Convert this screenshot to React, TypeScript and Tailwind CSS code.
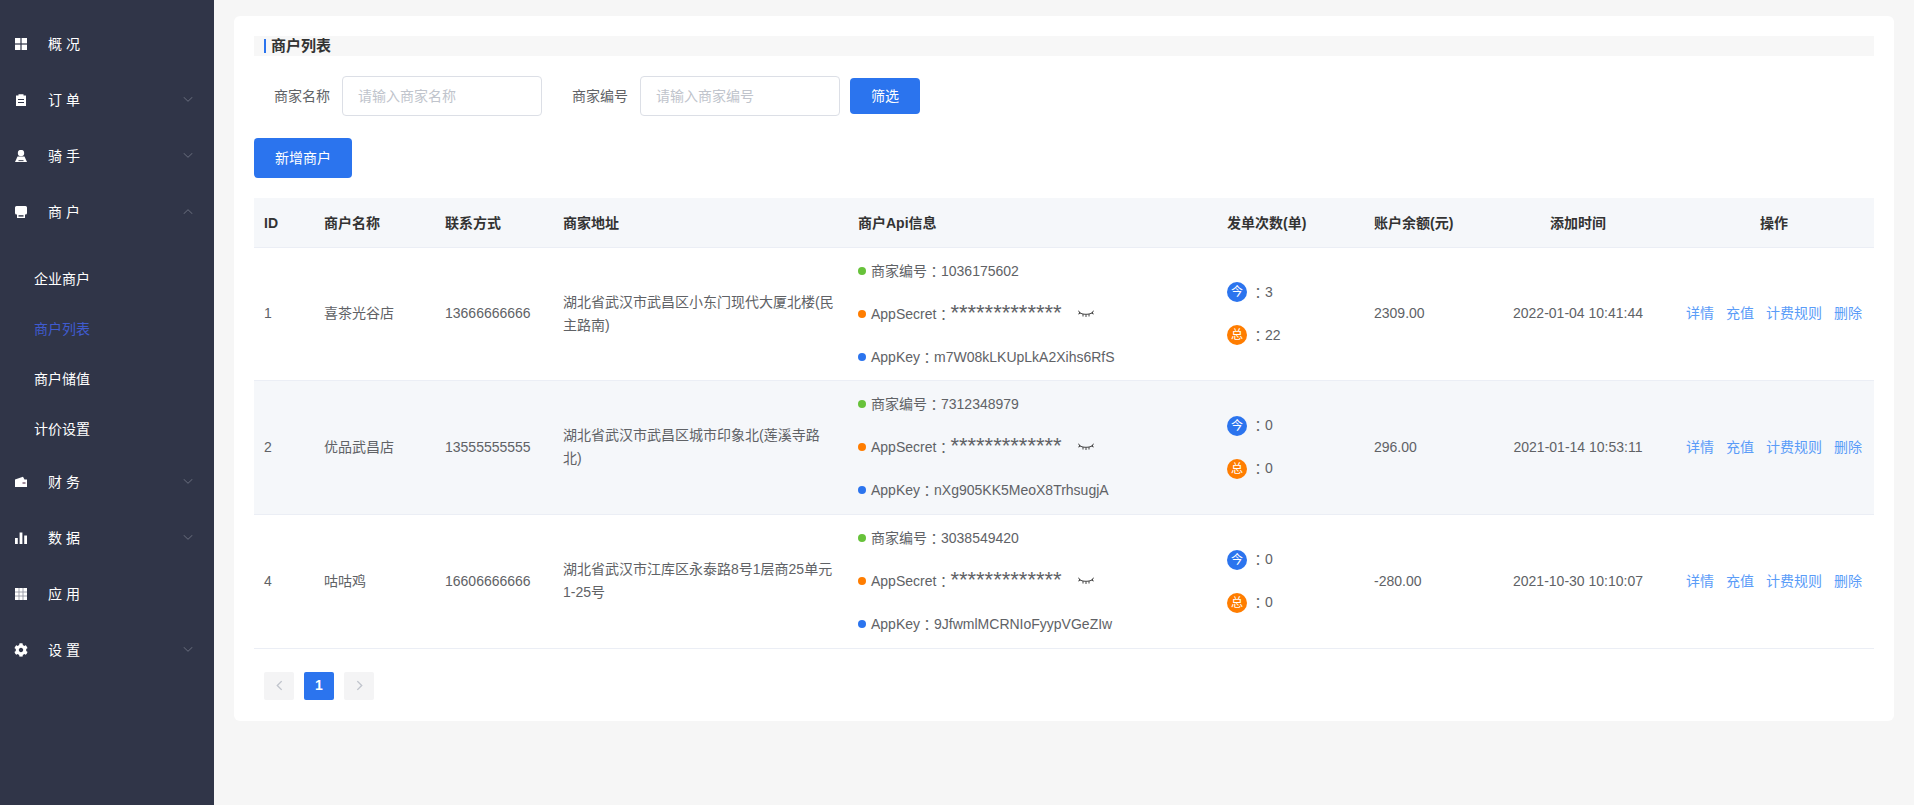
import React from "react";
import { FaCog } from "react-icons/fa";

const F = { fontFamily: '"Liberation Sans","Noto Sans CJK SC",sans-serif' };

const Ic = ({ children }: { children: React.ReactNode }) => (
  <svg viewBox="0 0 12 12" className="w-[12px] h-[12px] shrink-0" fill="#fff">{children}</svg>
);

const icons: Record<string, React.ReactNode> = {
  grid: <Ic><rect x="0" y="0" width="5.4" height="5.4" /><rect x="6.6" y="0" width="5.4" height="5.4" /><rect x="0" y="6.6" width="5.4" height="5.4" /><rect x="6.6" y="6.6" width="5.4" height="5.4" /></Ic>,
  order: <Ic><path d="M1 1.5h2.5V.3h5v1.2H11V12H1z" /><rect x="3" y="5" width="6" height="1" fill="#303548" /><rect x="3" y="8" width="6" height="1" fill="#303548" /></Ic>,
  user: <Ic><circle cx="6" cy="3" r="3.2" /><path d="M2.5 6.5h7L12 12H0z" /><rect x="3.5" y="10.2" width="5" height="0.9" fill="#303548" /></Ic>,
  shop: <Ic><path d="M1.5 0h9A1.5 1.5 0 0 1 12 1.5V7a1.5 1.5 0 0 1-1.5 1.5h-9A1.5 1.5 0 0 1 0 7V1.5A1.5 1.5 0 0 1 1.5 0z" /><path d="M2 8h8v4H2z" /><rect x="3.5" y="9.2" width="5" height="1.4" fill="#303548" /></Ic>,
  wallet: <Ic><path d="M0 3.5 8 .8l1.5 2.7H12V11H0z" /><rect x="7.5" y="6" width="3" height="2" fill="#a08a9a" /></Ic>,
  bars: <Ic><rect x="0" y="6" width="2.8" height="6" /><rect x="4.6" y="0.5" width="2.8" height="11.5" /><rect x="9.2" y="3.5" width="2.8" height="8.5" /></Ic>,
  table: <Ic><rect x="0" y="0" width="12" height="12" /><path d="M4 0v12M8 0v12M0 4h12M0 8h12" stroke="#8d8f9c" strokeWidth="0.8" /></Ic>,
  gear: <FaCog className="w-[14px] h-[14px] -ml-[1px] shrink-0 text-white" />,
};

const Chevron = ({ up }: { up?: boolean }) => (
  <svg viewBox="0 0 10 5" className="w-[10px] h-[5px] absolute right-[21px] top-[25px]" fill="none" stroke="#6a6f7e" strokeWidth="1">
    <path d={up ? "M0.5 5 5 0.7 9.5 5" : "M0.5 0 5 4.3 9.5 0"} />
  </svg>
);

const NavItem = ({ icon, label, arrow, up }: { icon: string; label: string; arrow?: boolean; up?: boolean }) => (
  <div className="relative h-[56px] flex items-center pl-[15px] text-white text-[14px]">
    <div className="w-[33px] flex items-center">{icons[icon]}</div>
    <span>{label}</span>
    {arrow && <Chevron up={up} />}
  </div>
);

const Sub = ({ label, active }: { label: string; active?: boolean }) => (
  <div className={`h-[50px] flex items-center pl-[34px] text-[14px] ${active ? "text-[#3f5bcf]" : "text-white"}`}>{label}</div>
);

const Colon = () => <span style={{ fontFamily: '"Noto Sans CJK TC",sans-serif' }}>：</span>;

const Eye = () => (
  <svg viewBox="0 0 16 8" className="w-[16px] h-[8px] ml-[16px]" fill="none" stroke="#444" strokeWidth="1">
    <path d="M1 2.2 C4 5 12 5 15 2.2" />
    <path d="M0.3 0.6 2 2.8M0.3 4 2.5 3.2M5 4v2.5M8 4.5v2.5M11 4v2.5M13.5 3.2 15.7 4M15.7 0.6 14 2.8" />
  </svg>
);

const Dot = ({ c }: { c: string }) => <span className={`w-[8px] h-[8px] rounded-full shrink-0 mr-[5px] ${c}`} />;

const Badge = ({ c, t }: { c: string; t: string }) => (
  <span className={`w-[20px] h-[20px] rounded-full text-white text-[12px] flex items-center justify-center mr-[4px] ${c}`}>{t}</span>
);

const rows = [
  { id: "1", name: "喜茶光谷店", tel: "13666666666", addr: "湖北省武汉市武昌区小东门现代大厦北楼(民主路南)", no: "1036175602", key: "m7W08kLKUpLkA2Xihs6RfS", today: "3", total: "22", bal: "2309.00", time: "2022-01-04 10:41:44", h: "h-[133px]" },
  { id: "2", name: "优品武昌店", tel: "13555555555", addr: "湖北省武汉市武昌区城市印象北(莲溪寺路北)", no: "7312348979", key: "nXg905KK5MeoX8TrhsugjA", today: "0", total: "0", bal: "296.00", time: "2021-01-14 10:53:11", h: "h-[134px]" },
  { id: "4", name: "咕咕鸡", tel: "16606666666", addr: "湖北省武汉市江库区永泰路8号1层商25单元1-25号", no: "3038549420", key: "9JfwmlMCRNIoFyypVGeZIw", today: "0", total: "0", bal: "-280.00", time: "2021-10-30 10:10:07", h: "h-[134px]" },
];

const heads: [string, string][] = [
  ["ID", "text-left"], ["商户名称", "text-left"], ["联系方式", "text-left"], ["商家地址", "text-left"], ["商户Api信息", "text-left"],
  ["发单次数(单)", "text-left"], ["账户余额(元)", "text-left"], ["添加时间", "text-center"], ["操作", "text-center"],
];

export default function App() {
  return (
    <div className="flex h-[805px] overflow-hidden bg-[#f6f6f6]" style={F}>
      <aside className="w-[214px] shrink-0 bg-[#303548] pt-[16px]">
        <NavItem icon="grid" label="概 况" />
        <NavItem icon="order" label="订 单" arrow />
        <NavItem icon="user" label="骑 手" arrow />
        <NavItem icon="shop" label="商 户" arrow up />
        <div className="pt-[14px]">
          <Sub label="企业商户" />
          <Sub label="商户列表" active />
          <Sub label="商户储值" />
          <Sub label="计价设置" />
        </div>
        <NavItem icon="wallet" label="财 务" arrow />
        <NavItem icon="bars" label="数 据" arrow />
        <NavItem icon="table" label="应 用" />
        <NavItem icon="gear" label="设 置" arrow />
      </aside>

      <main className="flex-1 min-w-0 pt-[16px] px-[20px]">
        <div className="bg-white rounded-[6px] px-[20px] pt-[20px] h-[705px]">
          <div className="h-[20px] bg-[#f7f7f7] flex items-center pl-[10px]">
            <span className="w-[2px] h-[14px] bg-[#2b74ee] mr-[5px]" />
            <span className="text-[15px] font-bold text-[#333]">商户列表</span>
          </div>

          <div className="flex items-center mt-[20px] h-[40px] text-[14px] text-[#606266]">
            <span className="ml-[20px] w-[56px] mr-[12px]">商家名称</span>
            <div className="w-[200px] h-[40px] border border-[#dcdfe6] rounded-[4px] flex items-center pl-[15px] text-[#c0c4cc]">请输入商家名称</div>
            <span className="ml-[30px] w-[56px] mr-[12px]">商家编号</span>
            <div className="w-[200px] h-[40px] border border-[#dcdfe6] rounded-[4px] flex items-center pl-[15px] text-[#c0c4cc]">请输入商家编号</div>
            <button className="ml-[10px] w-[70px] h-[36px] bg-[#2b74ee] rounded-[4px] text-white text-[14px]">筛选</button>
          </div>

          <button className="block mt-[22px] w-[98px] h-[40px] bg-[#2b74ee] rounded-[4px] text-white text-[14px]">新增商户</button>

          <table className="table-fixed w-[1620px] mt-[20px] border-collapse text-[14px] text-[#606266]">
            <colgroup>
              <col className="w-[60px]" /><col className="w-[121px]" /><col className="w-[118px]" /><col className="w-[295px]" /><col className="w-[369px]" />
              <col className="w-[147px]" /><col className="w-[118px]" /><col className="w-[192px]" /><col className="w-[200px]" />
            </colgroup>
            <thead>
              <tr className="h-[49px] bg-[#f5f7fa] border-b border-[#ebeef5]">
                {heads.map(([h, a]) => (
                  <th key={h} className={`px-[10px] pt-[2px] font-bold text-[#333] ${a}`}>{h}</th>
                ))}
              </tr>
            </thead>
            <tbody>
              {rows.map((r, i) => (
                <tr key={r.id} className={`${r.h} border-b border-[#ebeef5] ${i === 1 ? "bg-[#f5f7fa]" : ""}`}>
                  <td className="px-[10px]">{r.id}</td>
                  <td className="px-[10px]">{r.name}</td>
                  <td className="px-[10px]">{r.tel}</td>
                  <td className="px-[10px] leading-[23px]">{r.addr}</td>
                  <td className="px-[10px]">
                    <div className="flex flex-col gap-[21px] leading-[22px]">
                      <div className="flex items-center"><Dot c="bg-[#67c23a]" />商家编号<Colon />{r.no}</div>
                      <div className="flex items-center h-[22px]">
                        <Dot c="bg-[#ff7d00]" />AppSecret<Colon />
                        <span className="text-[22px] leading-[22px] -mt-[2px]">*************</span>
                        <Eye />
                      </div>
                      <div className="flex items-center"><Dot c="bg-[#2b74ee]" />AppKey<Colon />{r.key}</div>
                    </div>
                  </td>
                  <td className="px-[10px]">
                    <div className="flex flex-col gap-[22px]">
                      <div className="flex items-center"><Badge c="bg-[#2b74ee]" t="今" /><Colon />{r.today}</div>
                      <div className="flex items-center"><Badge c="bg-[#ff7d00]" t="总" /><Colon />{r.total}</div>
                    </div>
                  </td>
                  <td className="px-[10px]">{r.bal}</td>
                  <td className="px-[10px] text-center">{r.time}</td>
                  <td className="pl-[12px] text-[#5a9cf8]">
                    <div className="flex gap-[12px]">
                      <span>详情</span><span>充值</span><span>计费规则</span><span>删除</span>
                    </div>
                  </td>
                </tr>
              ))}
            </tbody>
          </table>

          <div className="flex gap-[10px] mt-[23px] ml-[10px]">
            <div className="w-[30px] h-[28px] rounded-[2px] bg-[#f4f4f5] flex items-center justify-center">
              <svg viewBox="0 0 8 12" className="w-[7px] h-[11px]" fill="none" stroke="#c0c4cc" strokeWidth="1.6"><path d="M6.5 1 1.5 6l5 5" /></svg>
            </div>
            <div className="w-[30px] h-[28px] rounded-[2px] bg-[#2b74ee] text-white text-[14px] font-bold flex items-center justify-center">1</div>
            <div className="w-[30px] h-[28px] rounded-[2px] bg-[#f4f4f5] flex items-center justify-center">
              <svg viewBox="0 0 8 12" className="w-[7px] h-[11px]" fill="none" stroke="#c0c4cc" strokeWidth="1.6"><path d="M1.5 1l5 5-5 5" /></svg>
            </div>
          </div>
        </div>
      </main>
    </div>
  );
}
